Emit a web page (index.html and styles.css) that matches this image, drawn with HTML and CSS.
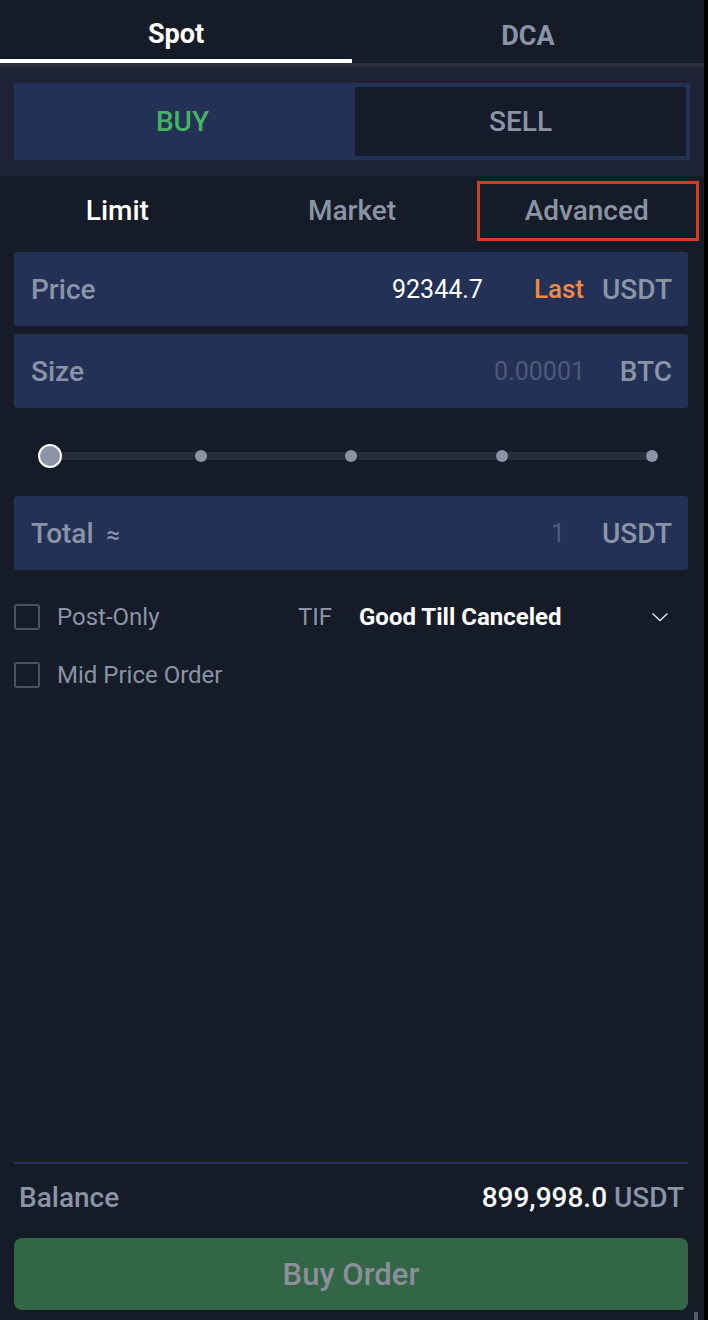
FILE: index.html
```html
<!DOCTYPE html>
<html lang="en">
<head>
<meta charset="utf-8">
<title>Spot Order</title>
<link rel="stylesheet" href="styles.css">
</head>
<body>
<div class="panel">
  <div class="mode-tabs">
    <div class="mode-tab active">Spot</div>
    <div class="mode-tab">DCA</div>
  </div>
  <div class="side-wrap">
    <div class="side-toggle">
      <div class="side buy">BUY</div>
      <div class="side sell">SELL</div>
    </div>
  </div>
  <div class="body">
    <div class="type-tabs">
      <div class="type-tab active">Limit</div>
      <div class="type-tab">Market</div>
      <div class="type-tab">Advanced<span class="highlight"></span></div>
    </div>
    <div class="field">
      <span class="label">Price</span>
      <span class="value white">92344.7</span>
      <span class="last">Last</span>
      <span class="unit">USDT</span>
    </div>
    <div class="field">
      <span class="label">Size</span>
      <span class="value dim">0.00001</span>
      <span class="unit">BTC</span>
    </div>
    <div class="slider">
      <div class="track">
        <span class="dot" style="left:0%"></span>
        <span class="dot" style="left:25%"></span>
        <span class="dot" style="left:50%"></span>
        <span class="dot" style="left:75%"></span>
        <span class="dot" style="left:100%"></span>
        <span class="handle" style="left:0%"></span>
      </div>
    </div>
    <div class="field">
      <span class="label">Total <span class="approx">≈</span></span>
      <span class="value dim total-val">1</span>
      <span class="unit">USDT</span>
    </div>
    <div class="opt-row first">
      <span class="check"></span>
      <span class="opt-label">Post-Only</span>
      <span class="tif">TIF</span>
      <span class="tif-val">Good Till Canceled</span>
      <svg class="chev" width="18" height="10" viewBox="0 0 18 10"><path d="M1.5 1.5 L9 8.5 L16.5 1.5" fill="none" stroke="#d8dce4" stroke-width="1.6"/></svg>
    </div>
    <div class="opt-row">
      <span class="check"></span>
      <span class="opt-label">Mid Price Order</span>
    </div>
  </div>
  <div class="footer">
    <div class="balance">
      <span class="bal-label">Balance</span>
      <span class="bal-val"><span class="amt">899,998.0</span> USDT</span>
    </div>
    <button class="order-btn">Buy Order</button>
  </div>
  <span class="scroll-tick"></span>
</div>
</body>
</html>
```

FILE: styles.css
```css
* { box-sizing: border-box; }
html, body {
  margin: 0;
  padding: 0;
  background: #000;
}
body {
  width: 708px;
  height: 1320px;
  font-family: Roboto, "Liberation Sans", sans-serif;
}
.panel {
  position: relative;
  width: 704px;
  height: 1320px;
  background: #161b28;
  display: flex;
  flex-direction: column;
}
.mode-tabs {
  display: flex;
  height: 67px;
  border-bottom: 4px solid #2b303c;
}
.mode-tab {
  flex: 1;
  display: flex;
  align-items: center;
  justify-content: center;
  font-size: 27px;
  font-weight: 700;
  color: #8a94a6;
  padding-top: 9px;
}
.mode-tab.active {
  color: #fff;
  border-bottom: 4px solid #fff;
}
.side-wrap {
  background: #1d2234;
  padding: 16px 14px;
}
.side-toggle {
  display: flex;
  height: 77px;
  background: #233157;
  padding: 4px;
}
.side {
  display: flex;
  align-items: center;
  justify-content: center;
  font-size: 28px;
  font-weight: 500;
}
.side.buy { flex: 0 0 337px; color: #47b262; padding-right: 8px; }
.side.sell { flex: 1; color: #8a94a6; background: #161b29; }
.body {
  flex: 1;
  padding: 0 16px 0 14px;
}
.type-tabs {
  display: flex;
  height: 68px;
  margin: 0 -16px 8px -14px;
}
.type-tab {
  position: relative;
  flex: 1;
  display: flex;
  align-items: center;
  justify-content: center;
  font-size: 28px;
  font-weight: 500;
  color: #8a94a6;
}
.type-tab.active { color: #fff; }
.highlight {
  position: absolute;
  left: 8px;
  right: 5px;
  top: 5px;
  bottom: 3px;
  border: 3px solid #d13c24;
}
.field {
  display: flex;
  align-items: center;
  height: 74px;
  background: #233157;
  border-radius: 3px;
  padding: 0 16px 0 17px;
  margin-bottom: 8px;
  font-size: 28px;
}
.label {
  flex: 1;
  color: #8a94a6;
  font-weight: 500;
}
.approx { margin-left: 6px; font-size: 24px; }
.value { font-weight: 400; font-size: 25px; }
.value.white { color: #fff; }
.value.dim { color: #4f5b76; }
.total-val { margin-right: 19px; }
.last {
  color: #ef8a45;
  font-weight: 500;
  font-size: 26px;
  margin-left: 51px;
}
.unit {
  color: #8a94a6;
  font-weight: 500;
  min-width: 69px;
  text-align: right;
  margin-left: 18px;
}
.slider {
  height: 40px;
  margin: 28px 0 20px 0;
  padding: 0 36px;
  display: flex;
  align-items: center;
}
.track {
  position: relative;
  flex: 1;
  height: 8px;
  background: #272d3b;
}
.dot {
  position: absolute;
  top: 50%;
  width: 12px;
  height: 12px;
  margin: -6px 0 0 -6px;
  border-radius: 50%;
  background: #8a94a6;
}
.handle {
  position: absolute;
  top: 50%;
  width: 24px;
  height: 24px;
  margin: -12px 0 0 -12px;
  border-radius: 50%;
  background: #8a94a6;
  border: 2px solid #fff;
}
.opt-row {
  display: flex;
  align-items: center;
  height: 40px;
  margin-top: 18px;
  font-size: 24px;
}
.opt-row.first { margin-top: 27px; }
.check {
  width: 26px;
  height: 26px;
  border: 2px solid #4a5161;
  border-radius: 3px;
  flex: none;
}
.opt-label {
  color: #8a94a6;
  margin-left: 17px;
  width: 241px;
}
.tif {
  color: #8a94a6;
  width: 61px;
}
.tif-val {
  color: #fff;
  font-weight: 700;
  flex: 1;
}
.chev { margin-right: 19px; }
.footer {
  padding: 0 16px 10px 14px;
}
.balance {
  border-top: 2px solid #263459;
  display: flex;
  justify-content: space-between;
  align-items: center;
  height: 76px;
  padding: 0 4px 8px 5px;
  font-size: 28px;
  font-weight: 500;
  color: #8a94a6;
}
.amt { color: #fff; }
.order-btn {
  display: block;
  width: 100%;
  height: 72px;
  border: none;
  border-radius: 8px;
  background: #336647;
  color: #8b8f99;
  font-family: inherit;
  font-size: 31px;
  font-weight: 500;
}
.scroll-tick {
  position: absolute;
  right: 6px;
  bottom: 0;
  width: 4px;
  height: 8px;
  background: #555b66;
}
```
